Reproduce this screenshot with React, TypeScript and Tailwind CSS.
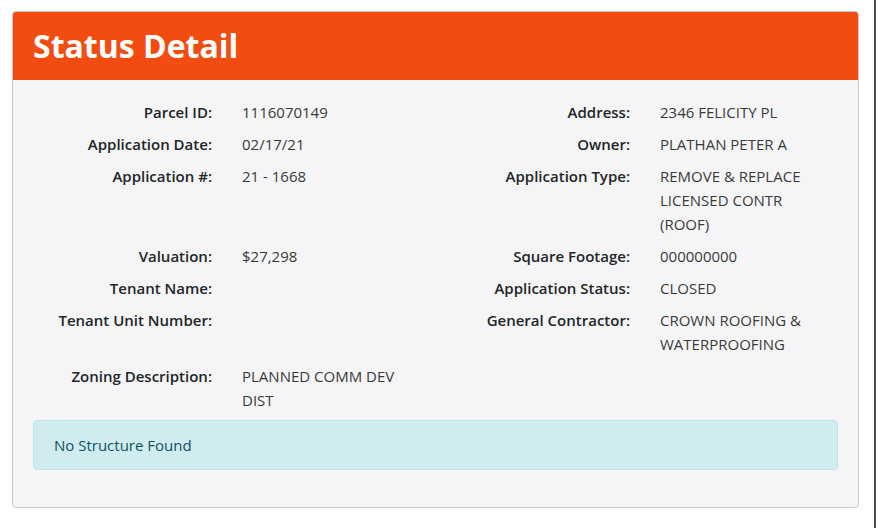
import React from 'react';

type Field = Readonly<{
	label: string;
	value?: string;
}>;

type Row = Readonly<{
	left: Field;
	right?: Field;
}>;

const rows: Row[] = [
	{ left: { label: 'Parcel ID:', value: '1116070149' }, right: { label: 'Address:', value: '2346 FELICITY PL' } },
	{ left: { label: 'Application Date:', value: '02/17/21' }, right: { label: 'Owner:', value: 'PLATHAN PETER A' } },
	{
		left: { label: 'Application #:', value: '21 - 1668' },
		right: { label: 'Application Type:', value: 'REMOVE & REPLACE LICENSED CONTR (ROOF)' },
	},
	{ left: { label: 'Valuation:', value: '$27,298' }, right: { label: 'Square Footage:', value: '000000000' } },
	{ left: { label: 'Tenant Name:' }, right: { label: 'Application Status:', value: 'CLOSED' } },
	{
		left: { label: 'Tenant Unit Number:' },
		right: { label: 'General Contractor:', value: 'CROWN ROOFING & WATERPROOFING' },
	},
	{ left: { label: 'Zoning Description:', value: 'PLANNED COMM DEV DIST' } },
];

const FieldCell = ({ field }: { field?: Field }) => (
	<div className="grid w-[387px] grid-cols-[179px_170px] gap-x-[30px]">
		{field ? (
			<>
				<div className="text-right font-semibold text-[#212529]">{field.label}</div>
				<div className="text-[#3a3a3a]">{field.value}</div>
			</>
		) : null}
	</div>
);

export default function App() {
	return (
		<div
			className="h-[528px] w-[876px] border-r-2 border-[#4a4a4a] bg-white pl-[12px] pt-[11px]"
			style={{ fontFamily: '"Open Sans", "Noto Sans", sans-serif' }}
		>
			<div className="w-[847px] overflow-hidden rounded-[4px] border border-[#c9c9c9] bg-[#f5f5f7]">
				<div className="flex h-[68px] items-center bg-[#f34c11] px-[20px]">
					<h1 className="text-[32px] font-bold leading-none text-white">Status Detail</h1>
				</div>
				<div className="px-[20px] pb-[37px] pt-[20px] text-[15px] leading-[24px]">
					{rows.map((row, i) => (
						<div key={i} className="mb-[8px] flex gap-x-[31px]">
							<FieldCell field={row.left} />
							<FieldCell field={row.right} />
						</div>
					))}
					<div className="flex h-[50px] items-center rounded-[4px] border border-[#bee5eb] bg-[#d1ecf1] px-[20px] text-[#0c5460]">
						No Structure Found
					</div>
				</div>
			</div>
		</div>
	);
}
